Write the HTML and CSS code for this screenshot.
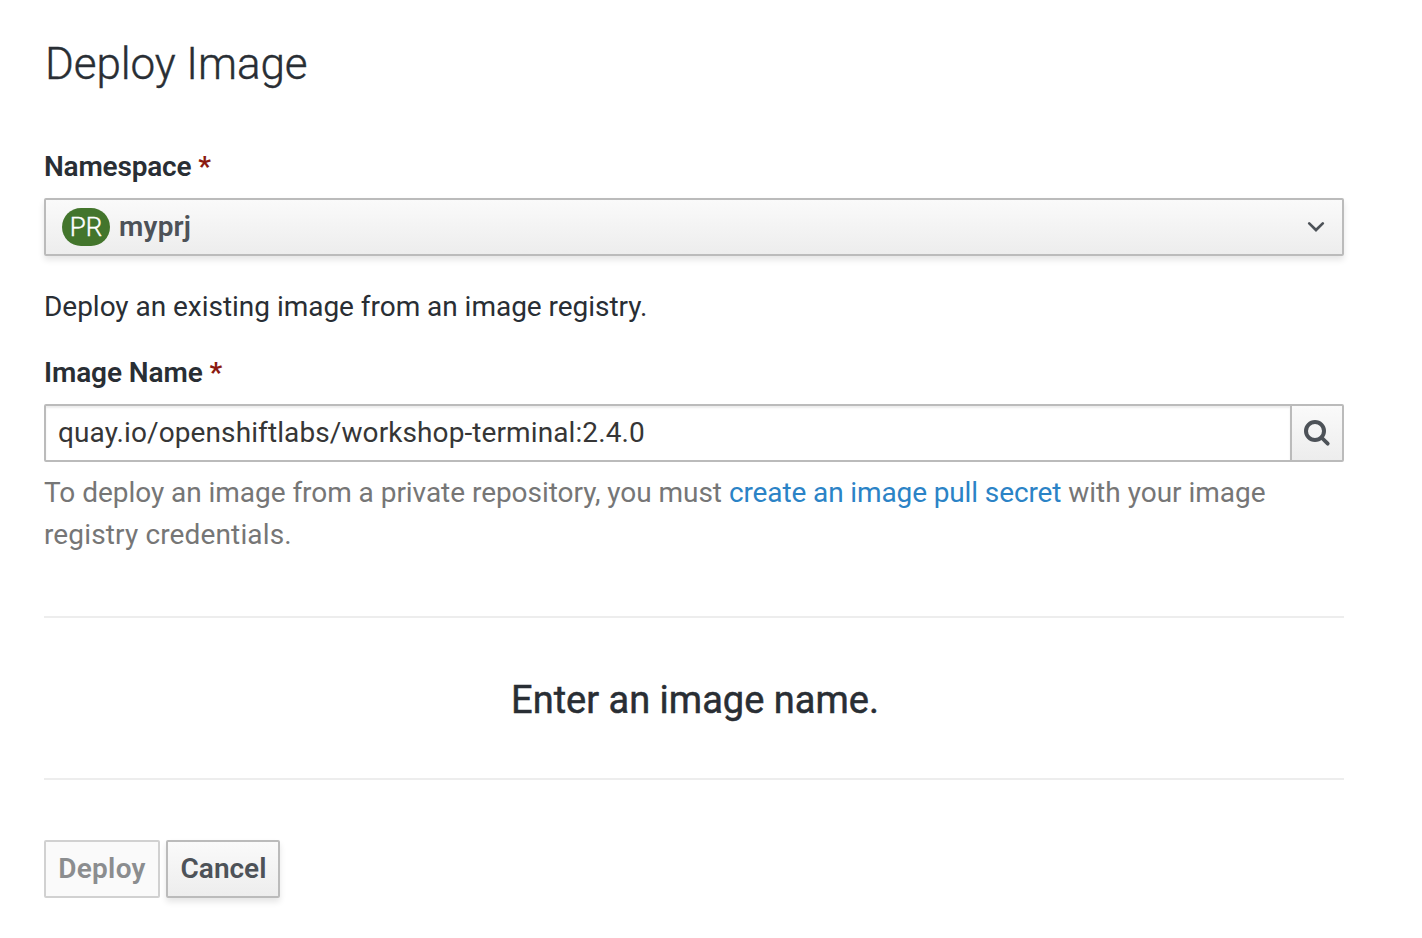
FILE: index.html
```html
<!DOCTYPE html>
<html lang="en">
<head>
<meta charset="utf-8">
<title>Deploy Image</title>
<link rel="stylesheet" href="styles.css">
</head>
<body>
<main class="page">
  <h1 class="title">Deploy Image</h1>
  <form class="form">
    <div class="label"><span class="label-namespace">Namespace</span><span class="required">*</span></div>
    <button type="button" class="select">
      <span class="badge">PR</span>
      <span class="project">myprj</span>
      <svg class="chevron" width="18" height="12" viewBox="0 0 18 12"><path d="M2.200 2.400 9 9l6.800-6.600" fill="none" stroke="#4d5258" stroke-width="2.700" stroke-linecap="round"/></svg>
    </button>
    <p class="description">Deploy an existing image from an image registry.</p>
    <div class="label"><span class="label-image">Image Name</span><span class="required">*</span></div>
    <div class="search">
      <div class="field">quay.io/openshiftlabs/workshop-terminal:2.4.0</div>
      <button type="button" class="search-button" aria-label="Find">
        <svg width="28" height="28" viewBox="0 0 28 28"><circle cx="12" cy="12" r="9" fill="none" stroke="#4d5258" stroke-width="4"/><path d="M18.500 18.500 24.700 24.700" stroke="#4d5258" stroke-width="3.800" stroke-linecap="round"/></svg>
      </button>
    </div>
    <p class="help"><span class="help-start">To deploy an image from a private repository, you must</span> <a class="link">create an image pull secret</a> <span>with your image</span><br><span class="help-end">registry credentials.</span></p>
    <section class="empty"><h2 class="empty-text">Enter an image name.</h2></section>
    <div class="actions">
      <button type="button" class="button deploy" disabled>Deploy</button>
      <button type="button" class="button cancel">Cancel</button>
    </div>
  </form>
</main>
</body>
</html>
```
FILE: styles.css
```css
* { box-sizing: border-box; }
body { margin: 0; background: #fff; color: #292e34; font-family: Roboto, "Open Sans", sans-serif; font-size: 28px; line-height: 42px; }
button { font: inherit; margin: 0; padding: 0; }
.page { width: 1388px; min-height: 938px; padding: 38px 44px 0; }
.title { margin: 0 0 56px; padding-left: 1px; font-size: 44px; font-weight: 300; line-height: 52px; letter-spacing: -.08px; white-space: nowrap; -webkit-text-stroke: .4px #292e34; }
.label { display: flex; gap: 7px; margin-bottom: 10px; font-weight: 600; white-space: nowrap; }
.label-namespace { letter-spacing: -.2px; }
.label-image { letter-spacing: -.1px; }
.required { color: #8b1a10; font-weight: 700; }
.select { display: flex; align-items: center; width: 1300px; height: 58px; padding: 0 17px 0 16px; border: 2px solid #bbb; border-radius: 2px; background: linear-gradient(#fafafa, #ededed); box-shadow: 0 4px 6px rgba(3, 3, 3, .1); color: #4d5258; }
.badge { display: flex; align-items: center; justify-content: center; width: 48px; height: 38px; margin-right: 9px; border-radius: 19px; background: #43752c; color: #fff; font-size: 26px; font-weight: 300; line-height: 38px; -webkit-text-stroke: .4px #fff; }
.project { font-weight: 600; letter-spacing: .2px; }
.chevron { margin-left: auto; }
.description { margin: 30px 0 24px; letter-spacing: -.03px; white-space: nowrap; }
.search { display: flex; height: 58px; border: 2px solid #bbb; border-radius: 2px; }
.field { display: flex; align-items: center; flex: 1; padding-left: 12px; color: #363636; box-shadow: inset 0 2px 2px rgba(3, 3, 3, .075); letter-spacing: .1px; white-space: nowrap; }
.search-button { display: flex; align-items: center; justify-content: center; width: 52px; border: 0; border-left: 2px solid #bbb; background: linear-gradient(#fafafa, #ededed); }
.help { margin: 10px 0 60px; color: #767676; white-space: nowrap; }
.help-start { letter-spacing: -.04px; }
.help-end { letter-spacing: .14px; }
.link { color: #2b83c6; letter-spacing: -.12px; }
.empty { display: flex; align-items: center; justify-content: center; height: 164px; border-top: 2px solid #ededed; border-bottom: 2px solid #ededed; }
.empty-text { margin: 3px 0 0 2px; font-size: 38px; font-weight: 400; letter-spacing: 0; white-space: nowrap; -webkit-text-stroke: .5px #292e34; }
.actions { display: flex; gap: 6px; margin-top: 60px; }
.button { display: flex; align-items: center; justify-content: center; height: 58px; border: 2px solid #bbb; border-radius: 2px; font-weight: 600; }
.deploy { width: 116px; border-color: #d1d1d1; background: #fafafa; color: #8b8d8f; letter-spacing: .3px; }
.cancel { width: 114px; background: linear-gradient(#fafafa, #ededed); box-shadow: 0 4px 6px rgba(3, 3, 3, .1); color: #4d5258; padding-left: 1px; }
```
